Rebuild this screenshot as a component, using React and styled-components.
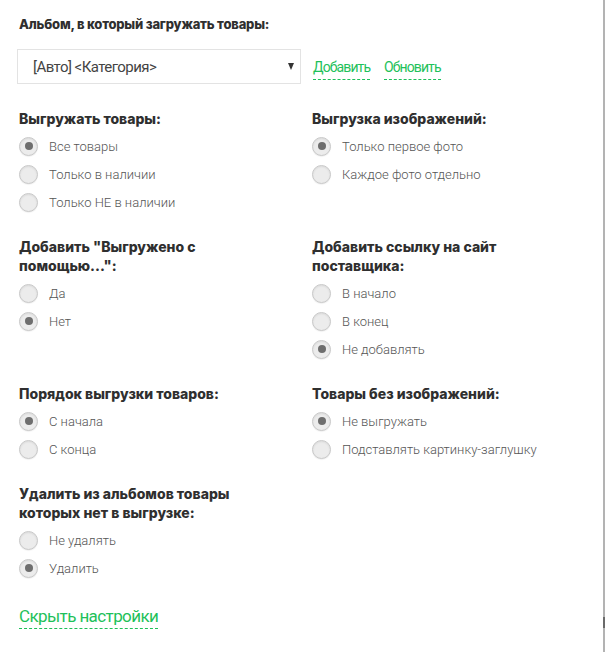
import React from "react";
import styled, { createGlobalStyle } from "styled-components";

const Global = createGlobalStyle`
  html, body { margin: 0; padding: 0; background: #fff; }
  body { font-family: "Roboto", "Liberation Sans", sans-serif; }
  * { box-sizing: border-box; }
`;

const Frame = styled.div`
  position: relative;
  width: 605px;
  min-height: 652px;
  padding: 14px 0 0 19px;
  border-right: 2px solid #b3b3b3;
  &::after {
    content: "";
    position: absolute;
    right: -2px;
    top: 617px;
    width: 2px;
    height: 11px;
    background: #6a6a6a;
  }
`;

const Title = styled.h2`
  margin: 0;
  font-family: "Inter", "Noto Sans", sans-serif;
  font-weight: 800;
  font-size: 13px;
  line-height: 20px;
  color: #2f2f2f;
  letter-spacing: -0.2px;
`;

const AlbumRow = styled.div`
  display: flex;
  align-items: center;
  gap: 12px;
  margin: 15px 0 0 -2px;
`;

const Select = styled.div`
  position: relative;
  width: 284px;
  height: 35px;
  border: 1px solid #e3e3e3;
  display: flex;
  align-items: center;
  padding-left: 15px;
  font-size: 15px;
  letter-spacing: -0.55px;
  color: #444;
  font-family: "Roboto", sans-serif;
`;

const Arrow = styled.span`
  position: absolute;
  right: 6px;
  top: 13px;
  width: 0;
  height: 0;
  border-left: 3.5px solid transparent;
  border-right: 3.5px solid transparent;
  border-top: 7px solid #333;
`;

const Links = styled.div`
  display: flex;
  gap: 14px;
  padding-top: 5px;
`;

const DashLink = styled.a`
  font-family: "Roboto", sans-serif;
  font-size: ${(p) => p.$size || 14}px;
  line-height: ${(p) => (p.$size ? 20 : 18)}px;
  letter-spacing: ${(p) => (p.$size ? -0.6 : -0.9)}px;
  padding-bottom: ${(p) => (p.$size ? 2 : 3)}px;
  color: #1ec15a;
  text-decoration: none;
  border-bottom: 1px dashed #1ec15a;
  cursor: pointer;
  display: inline-block;
`;

const Grid = styled.div`
  display: grid;
  grid-template-columns: 293px 1fr;
  row-gap: 21px;
  margin-top: 25px;
`;

const Section = styled.div`
  display: flex;
  flex-direction: column;
`;

const Heading = styled.div`
  font-family: "Inter", "Noto Sans", sans-serif;
  font-weight: 800;
  font-size: 14px;
  line-height: 19px;
  color: #2f2f2f;
  margin-bottom: 4px;
  max-width: 240px;
`;

const Option = styled.label`
  display: flex;
  align-items: center;
  height: 28px;
  gap: 11px;
  font-family: "Roboto", sans-serif;
  font-weight: 300;
  font-size: 13px;
  color: #555;
  cursor: pointer;
`;

const Circle = styled.span`
  width: 19px;
  height: 19px;
  border-radius: 50%;
  background: #ececec;
  border: 1px solid #c9c9c9;
  box-shadow: inset 0 1px 2px rgba(0, 0, 0, 0.08), 0 1px 1px rgba(0, 0, 0, 0.06);
  display: flex;
  align-items: center;
  justify-content: center;
  flex-shrink: 0;
  &::after {
    content: "";
    width: 8px;
    height: 8px;
    border-radius: 50%;
    background: #6e6e6e;
    display: ${(p) => (p.$on ? "block" : "none")};
  }
`;

const Footer = styled.div`
  margin-top: 24px;
`;

const sections = [
  { title: "Выгружать товары:", opts: ["Все товары", "Только в наличии", "Только НЕ в наличии"], sel: 0 },
  { title: "Выгрузка изображений:", opts: ["Только первое фото", "Каждое фото отдельно"], sel: 0 },
  { title: "Добавить \"Выгружено с помощью...\":", opts: ["Да", "Нет"], sel: 1 },
  { title: "Добавить ссылку на сайт поставщика:", opts: ["В начало", "В конец", "Не добавлять"], sel: 2 },
  { title: "Порядок выгрузки товаров:", opts: ["С начала", "С конца"], sel: 0 },
  { title: "Товары без изображений:", opts: ["Не выгружать", "Подставлять картинку-заглушку"], sel: 0 },
  { title: "Удалить из альбомов товары которых нет в выгрузке:", opts: ["Не удалять", "Удалить"], sel: 1 },
];

export default function App() {
  return (
    <>
      <Global />
      <Frame>
        <Title>Альбом, в который загружать товары:</Title>
        <AlbumRow>
          <Select>
            [Авто] &lt;Категория&gt;
            <Arrow />
          </Select>
          <Links>
            <DashLink>Добавить</DashLink>
            <DashLink>Обновить</DashLink>
          </Links>
        </AlbumRow>
        <Grid>
          {sections.map((s, i) => (
            <Section key={i}>
              <Heading>{s.title}</Heading>
              {s.opts.map((o, j) => (
                <Option key={j}>
                  <Circle $on={j === s.sel} />
                  {o}
                </Option>
              ))}
            </Section>
          ))}
        </Grid>
        <Footer>
          <DashLink $size={17}>Скрыть настройки</DashLink>
        </Footer>
      </Frame>
    </>
  );
}
